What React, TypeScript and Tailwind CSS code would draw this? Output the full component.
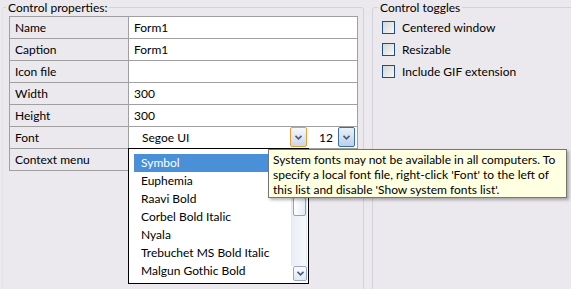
import React from 'react';

const rows = [
  { label: 'Name', value: 'Form1' },
  { label: 'Caption', value: 'Form1' },
  { label: 'Icon file', value: '' },
  { label: 'Width', value: '300' },
  { label: 'Height', value: '300' },
];

const fonts = ['Symbol', 'Euphemia', 'Raavi Bold', 'Corbel Bold Italic', 'Nyala', 'Trebuchet MS Bold Italic', 'Malgun Gothic Bold'];

const toggles = ['Centered window', 'Resizable', 'Include GIF extension'];

function Chevron() {
  return (
    <svg width="7" height="5" viewBox="0 0 7 5" className="block">
      <polyline points="0.5,0.8 3.5,3.8 6.5,0.8" fill="none" stroke="#4a5b7c" strokeWidth="1.6" />
    </svg>
  );
}

function DropButton({ hot }: { hot?: boolean }) {
  return (
    <div
      className={
        hot
          ? 'flex h-[20px] w-[17px] items-center justify-center rounded-[2px] border border-[#e3a23e] bg-gradient-to-b from-[#f7f9fc] to-[#c9d7ea]'
          : 'flex h-[20px] w-[17px] items-center justify-center rounded-[2px] border border-[#3c6fa6] bg-gradient-to-b from-[#eaf1fa] to-[#bcd0ea]'
      }
    >
      <Chevron />
    </div>
  );
}

export default function App() {
  return (
    <div className="relative h-[289px] w-[571px] overflow-hidden bg-[#ebe9ed] font-[Lato,sans-serif] text-[12px] leading-[15px] text-black">
      <div className="flex gap-[8px] pl-[2px]">
        <fieldset className="h-[320px] w-[362px] shrink-0 rounded-[3px] border border-[#d3d2d8] border-l-[#e4e2e6]">
          <legend className="ml-[3px] px-[2px]">Control properties:</legend>
          <div className="ml-[6px] mt-[1px] w-[349px] border-l border-t border-[#a0a0a0]">
            {rows.map(({ label, value }) => (
              <div key={label} className="flex h-[22px]">
                <div className="flex w-[119px] items-center border-b border-r border-[#a0a0a0] pl-[5px]">{label}</div>
                <div className="flex flex-1 items-center border-b border-r border-[#a0a0a0] bg-white pl-[5px]">{value}</div>
              </div>
            ))}
            <div className="flex h-[22px]">
              <div className="flex w-[119px] items-center border-b border-r border-[#a0a0a0] pl-[5px]">Font</div>
              <div className="flex flex-1 items-start border-b border-r border-[#a0a0a0] bg-white">
                <span className="w-[161px] pl-[13px] leading-[21px]">Segoe UI</span>
                <DropButton hot />
                <span className="w-[31px] pr-[5px] text-right leading-[21px]">12</span>
                <DropButton />
              </div>
            </div>
            <div className="flex h-[22px]">
              <div className="flex w-[119px] items-center border-b border-r border-[#a0a0a0] pl-[5px]">Context menu</div>
              <div className="flex-1 border-b border-r border-[#a0a0a0] bg-white" />
            </div>
          </div>
        </fieldset>

        <fieldset className="h-[320px] w-[260px] shrink-0 rounded-[3px] border border-[#d3d2d8]">
          <legend className="ml-[5px] px-[2px]">Control toggles</legend>
          <div className="mt-[1px] pl-[9px]">
            {toggles.map((t) => (
              <div key={t} className="flex h-[22px] items-center gap-[7px]">
                <div className="h-[13px] w-[13px] border border-[#1e4f80] bg-gradient-to-br from-[#d6d6d6] to-[#f7f7f7]" />
                <span>{t}</span>
              </div>
            ))}
          </div>
        </fieldset>
      </div>

      {/* font list, dropped open */}
      <div className="absolute left-[128px] top-[148px] flex h-[136px] w-[181px] border border-black bg-white">
        <div className="w-[162px] pl-[5px] pt-[5px]">
          {fonts.map((f, i) => (
            <div
              key={f}
              className={
                i === 0
                  ? 'h-[18px] bg-[#4a90d9] pl-[7px] leading-[18px] text-white'
                  : 'h-[18px] pl-[7px] leading-[18px]'
              }
            >
              {f}
            </div>
          ))}
        </div>
        <div className="flex w-[16px] flex-col pb-[2px] pt-[1px]">
          <div className="mx-auto flex h-[15px] w-[14px] items-center justify-center rounded-[2px] border border-[#95a8c4] bg-gradient-to-b from-[#fbfcfe] to-[#dfe8f4]">
            <svg width="7" height="5" viewBox="0 0 7 5" className="block rotate-180">
              <polyline points="0.5,0.8 3.5,3.8 6.5,0.8" fill="none" stroke="#4a5b7c" strokeWidth="1.6" />
            </svg>
          </div>
          <div className="flex-1 border-x border-[#e3e9f2] bg-gradient-to-r from-[#e9eef6] to-[#f6f8fb] pt-[32px]">
            <div className="mx-auto h-[19px] w-[13px] rounded-[2px] border border-[#8fa2bf] bg-gradient-to-r from-[#ffffff] to-[#e4ebf5]" />
          </div>
          <div className="ml-auto flex h-[15px] w-[14px] items-center justify-center rounded-[2px] border border-[#95a8c4] bg-gradient-to-b from-[#fbfcfe] to-[#dfe8f4]">
            <Chevron />
          </div>
        </div>
      </div>

      {/* tooltip */}
      <div className="absolute left-[268px] top-[149px] h-[49px] w-[299px] border border-[#767676] bg-[#ffffe1] px-[4px] pt-[2px] shadow-[2px_2px_3px_rgba(0,0,0,0.3)]">
        <div>System fonts may not be available in all computers. To</div>
        <div>specify a local font file, right-click 'Font' to the left of</div>
        <div>this list and disable 'Show system fonts list'.</div>
      </div>
    </div>
  );
}
